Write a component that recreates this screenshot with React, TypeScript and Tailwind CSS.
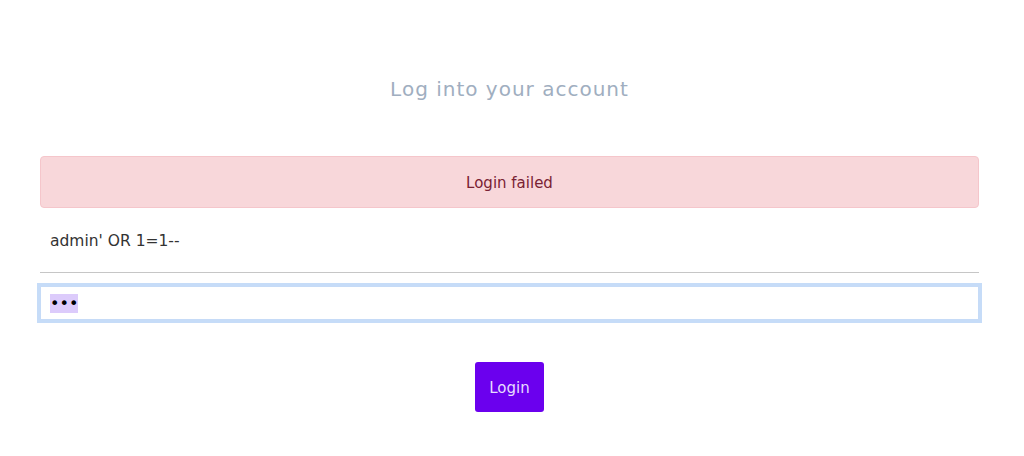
export default function App() {
  return (
    <div className="min-h-screen bg-white font-['DejaVu_Sans',sans-serif]">
      <div className="pl-10 pr-[45px] pt-[74px]">
        {/* Header */}
        <h1 className="text-center text-[20px] leading-[30px] tracking-wider text-[#a0aec0] mb-[52px]">
          Log into your account
        </h1>

        {/* Error alert */}
        <div className="h-[52px] flex items-center justify-center pt-[2px] rounded-[4px] border border-[#f5c6cb] bg-[#f8d7da] text-[15px] text-[#7a2233]">
          Login failed
        </div>

        {/* Username */}
        <div className="h-[65px] flex items-center pt-[3px] px-[10px] border-b border-[#c6c6c6] text-[15.5px] text-[#333333]">
          admin' OR 1=1--
        </div>

        {/* Password (focused, text selected) */}
        <div className="mt-[13px] h-[34px] flex items-center px-[9px] border border-[#c6dbf7] shadow-[0_0_0_3px_#c6dcf8] bg-white">
          <span className="bg-[#dccbfb] text-[16px] leading-[19px] text-black">•••</span>
        </div>

        {/* Submit */}
        <div className="mt-[42px] flex justify-center">
          <button className="h-[50px] w-[69px] pt-[2px] rounded-[3px] bg-[#6b00ee] text-[15px] text-[#e6dcff]">
            Login
          </button>
        </div>
      </div>
    </div>
  )
}
